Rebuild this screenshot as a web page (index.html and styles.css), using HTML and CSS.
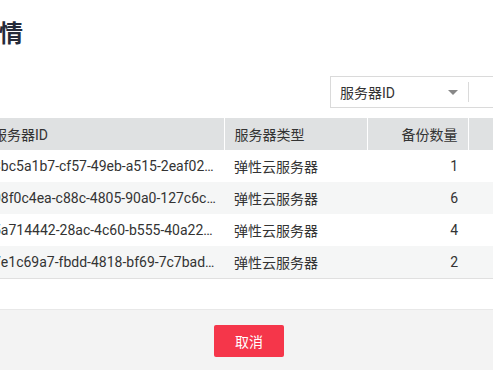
FILE: index.html
```html
<!DOCTYPE html>
<html>
<head>
    <meta charset="utf-8">
    <title>详情</title>
    <link rel="stylesheet" href="styles.css">
</head>
<body>
    <div class="dialog">
        <div class="dialog-body">
            <h2 class="dialog-title">详情</h2>

            <div class="filter-bar">
                <div class="search-group">
                    <div class="select">
                        <span>服务器ID</span>
                        <i class="caret"></i>
                    </div>
                    <input class="search-input" type="text">
                </div>
            </div>

            <table class="data-table">
                <colgroup>
                    <col class="col-id">
                    <col class="col-type">
                    <col class="col-count">
                    <col class="col-op">
                </colgroup>
                <thead>
                    <tr>
                        <th>服务器ID</th>
                        <th>服务器类型</th>
                        <th class="num">备份数量</th>
                        <th></th>
                    </tr>
                </thead>
                <tbody>
                    <tr>
                        <td class="id-cell"><div class="ellipsis">3bc5a1b7-cf57-49eb-a515-2eaf02d7c4e1</div></td>
                        <td>弹性云服务器</td>
                        <td class="num">1</td>
                        <td></td>
                    </tr>
                    <tr>
                        <td class="id-cell"><div class="ellipsis">08f0c4ea-c88c-4805-90a0-127c6c3f81b2</div></td>
                        <td>弹性云服务器</td>
                        <td class="num">6</td>
                        <td></td>
                    </tr>
                    <tr>
                        <td class="id-cell"><div class="ellipsis">5a714442-28ac-4c60-b555-40a22e19d6f0</div></td>
                        <td>弹性云服务器</td>
                        <td class="num">4</td>
                        <td></td>
                    </tr>
                    <tr>
                        <td class="id-cell"><div class="ellipsis">7e1c69a7-fbdd-4818-bf69-7c7bad24e5c9</div></td>
                        <td>弹性云服务器</td>
                        <td class="num">2</td>
                        <td></td>
                    </tr>
                </tbody>
            </table>
        </div>

        <div class="dialog-footer">
            <button class="btn-cancel">取消</button>
        </div>
    </div>
</body>
</html>
```

FILE: styles.css
```css
html, body {
    margin: 0;
    padding: 0;
    overflow: hidden;
    background: #fff;
}
body {
    font-family: Roboto, "Noto Sans CJK SC", sans-serif;
    font-size: 14px;
    color: #333;
}
.dialog {
    margin-left: -17px;
    width: 620px;
}
.dialog-body {
    padding-top: 18px;
    padding-bottom: 30px;
}
.dialog-title {
    margin: 0 0 0 -8px;
    font-size: 24px;
    line-height: 32px;
    font-weight: bold;
    color: #252b3a;
}
.filter-bar {
    display: flex;
    margin-top: 26px;
    padding-left: 347px;
}
.search-group {
    display: flex;
    align-items: center;
    height: 30px;
    width: 300px;
    border: 1px solid #dadada;
    background: #fff;
}
.select {
    position: relative;
    flex-shrink: 0;
    display: flex;
    align-items: center;
    justify-content: space-between;
    width: 138px;
    height: 30px;
    padding: 0 11px 0 9px;
    box-sizing: border-box;
}
.select::after {
    content: "";
    position: absolute;
    right: 0;
    top: 5px;
    bottom: 5px;
    border-right: 1px solid #dadada;
}
.caret {
    width: 0;
    height: 0;
    border-left: 5px solid transparent;
    border-right: 5px solid transparent;
    border-top: 5px solid #888;
}
.search-input {
    flex: 1;
    min-width: 0;
    border: none;
    height: 28px;
    outline: none;
}
.data-table {
    margin-top: 10px;
    width: 620px;
    border-collapse: collapse;
    table-layout: fixed;
}
.col-id { width: 241px; }
.col-type { width: 143px; }
.col-count { width: 101px; }
.data-table th {
    height: 32px;
    padding: 0 10px;
    background: #dfe1e2;
    font-weight: normal;
    text-align: left;
    border-left: 1px solid #fff;
    color: #333;
}
.data-table th:first-child {
    border-left: none;
}
.data-table td {
    height: 32px;
    padding: 0 10px;
    box-sizing: border-box;
}
.data-table td.id-cell {
    padding-right: 6px;
}
.data-table tbody tr:nth-child(even) td {
    background: #f5f6f6;
}
.data-table tbody tr:last-child td {
    border-bottom: 1px solid #e0e0e0;
}
.data-table .num {
    text-align: right;
}
.ellipsis {
    white-space: nowrap;
    overflow: hidden;
    text-overflow: ellipsis;
}
.dialog-footer {
    border-top: 1px solid #e8e8e8;
    background: #f3f3f3;
    height: 80px;
    padding-top: 15px;
    padding-left: 231px;
    box-sizing: border-box;
}
.btn-cancel {
    width: 70px;
    height: 32px;
    border: none;
    border-radius: 2px;
    background: #f5364a;
    color: #fff;
    font-family: Roboto, "Noto Sans CJK SC", sans-serif;
    font-size: 14px;
    cursor: pointer;
}
```
